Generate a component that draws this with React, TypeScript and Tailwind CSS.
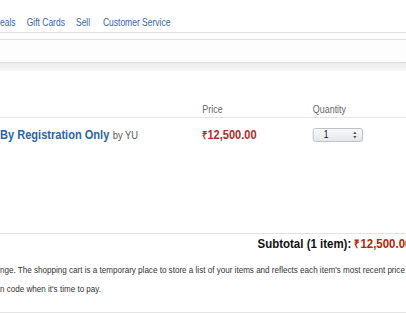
import React from "react";

export default function App() {
  const font = { fontFamily: "'Liberation Sans', Arial, Helvetica, sans-serif" };
  return (
    <div className="w-[406px] h-[314px] overflow-hidden bg-white" style={font}>
      <div className="w-[478px] h-[314px] origin-top-left scale-x-[0.85] relative">
        {/* nav */}
        <div className="h-[33px] border-b border-[#e2e2e2] flex items-start pt-[17px] text-[10px] leading-[12px] text-[#3565a3] whitespace-nowrap">
          <span>eals</span>
          <span className="ml-[13px]">Gift Cards</span>
          <span className="ml-[13px]">Sell</span>
          <span className="ml-[15px]">Customer Service</span>
        </div>
        <div className="h-[6px]" />
        <div className="h-[24px] border-t border-b border-[#e0e0e0] bg-[#fdfdfd]" />
        <div className="h-[8px] bg-gradient-to-b from-[#ebebeb] to-[#f7f7f7]" />

        {/* header */}
        <div className="mt-[32px] grid grid-cols-[238px_130px_1fr] text-[10.5px] leading-[12px] text-[#666] border-b border-[#e5e5e5] pb-[2px]">
          <span />
          <span>Price</span>
          <span>Quantity</span>
        </div>

        {/* item row */}
        <div className="mt-[7px] grid grid-cols-[238px_130px_1fr] items-center h-[15px] whitespace-nowrap">
          <div className="flex items-baseline">
            <span className="text-[13px] font-bold text-[#2a63b0]">By Registration Only</span>
            <span className="ml-[4px] text-[11px] text-[#555]">by YU</span>
          </div>
          <span className="text-[13px] font-bold text-[#b12b28]">
            <span className="text-[11px]">₹</span>12,500.00
          </span>
          <div className="w-[59px] h-[14px] rounded-[3px] border border-[#b9bcc1] bg-gradient-to-b from-[#f7f8fa] to-[#e4e6e9] flex items-center text-[10px] text-[#111]">
            <span className="ml-[12px] leading-[12px]">1</span>
            <svg className="ml-auto mr-[6px]" width="5" height="8" viewBox="0 0 5 8">
              <path d="M2.5 0.5 L4.5 3 L0.5 3 Z" fill="#555" />
              <path d="M2.5 7.5 L4.5 5 L0.5 5 Z" fill="#555" />
            </svg>
          </div>
        </div>

        {/* divider + subtotal */}
        <div className="mt-[93px] border-t border-[#e3e3e3]" />
        <div className="mt-[2px] h-[16px] whitespace-nowrap text-[13.5px] font-bold leading-[16px] pl-[303px] text-[#111]">
          Subtotal (1 item): <span className="text-[#b12704]"><span className="text-[11.5px]">₹</span>12,500.00</span>
        </div>

        <div className="mt-[8px] text-[9.5px] leading-[19px] text-[#333] whitespace-nowrap">
          <div>nge. The shopping cart is a temporary place to store a list of your items and reflects each item's most recent price</div>
          <div>n code when it's time to pay.</div>
        </div>
        <div className="absolute left-0 right-0 top-[312px] border-t border-[#e3e3e3]" />
      </div>
    </div>
  );
}
